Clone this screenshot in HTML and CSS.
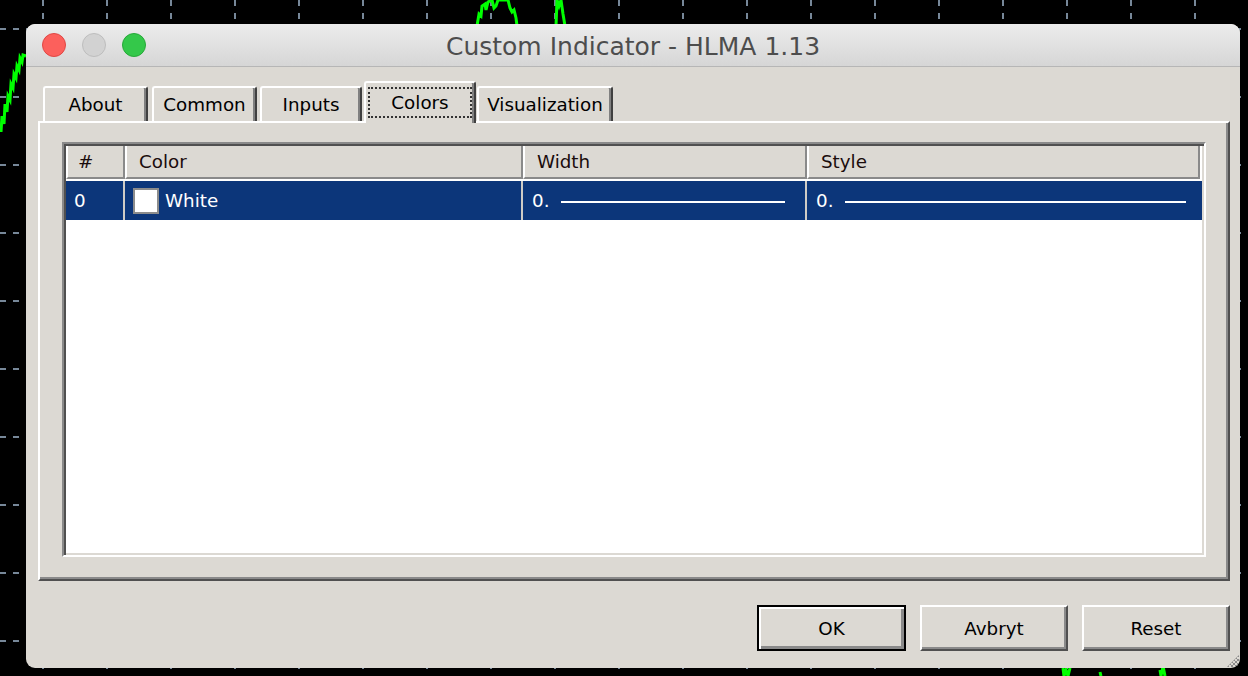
FILE: index.html
```html
<!DOCTYPE html>
<html>
<head>
<meta charset="utf-8">
<meta name="viewport" content="width=device-width, initial-scale=1.0">
<title>Custom Indicator - HLMA 1.13</title>

<link rel="stylesheet" href="styles.css">
</head>

<body>
<!-- chart behind the dialog -->
<svg class="chart" viewBox="0 0 1248 676" xmlns="http://www.w3.org/2000/svg">
    <path class="grid" d="M43 0V676M107 0V676M171 0V676M235 0V676M299 0V676M363 0V676M427 0V676M491 0V676M555 0V676M619 0V676M683 0V676M747 0V676M811 0V676M875 0V676M939 0V676M1003 0V676M1067 0V676M1131 0V676M1195 0V676"/>
    <path class="grid" d="M0 29H1248M0 97H1248M0 165H1248M0 233H1248M0 301H1248M0 369H1248M0 437H1248M0 505H1248M0 573H1248M0 641H1248"/>
    <polyline class="price" points="1,132 2,116 4,124 5,104 7,112 8,96 10,100 11,84 13,88 14,74 16,78 17,66 19,70 20,58 22,62 23,55 26,56"/>
    <polyline class="price" points="477,26 479,14 481,16 482,6 485,4 486,10 488,2 492,0 494,8 496,6 498,0 508,0 510,8 512,12 514,10 516,18 517,26"/>
    <polyline class="price" points="556,26 557,0 559,6 561,0 563,14 565,26"/>
    <polyline class="price" points="1063,668 1064,676 1066,670 1068,676 1070,668"/>
    <polyline class="price" points="1100,672 1101,676"/>
    <polyline class="price" points="1160,670 1161,676 1163,666 1165,676"/>
</svg>

<div class="window">
    <div class="titlebar">
        <div class="lights">
            <span class="light close"></span>
            <span class="light minimize"></span>
            <span class="light zoom"></span>
        </div>
        <div class="title">Custom Indicator - HLMA 1.13</div>
    </div>

    <div class="content">
        <div class="tabs">
            <div class="tab tab-about">About</div>
            <div class="tab tab-common">Common</div>
            <div class="tab tab-inputs">Inputs</div>
            <div class="tab tab-colors active"><span class="focus">Colors</span></div>
            <div class="tab tab-visual">Visualization</div>
        </div>

        <div class="panel">
            <div class="list">
                <div class="list-head">
                    <div class="head-cell first">#</div>
                    <div class="head-cell">Color</div>
                    <div class="head-cell">Width</div>
                    <div class="head-cell last">Style</div>
                </div>
                <div class="list-row selected">
                    <div class="cell cell-num">0</div>
                    <div class="cell cell-color"><span class="swatch"></span>White</div>
                    <div class="cell cell-width">0.<span class="line"></span></div>
                    <div class="cell cell-style">0.<span class="line"></span></div>
                </div>
            </div>
        </div>

        <div class="buttons">
            <div class="button default">OK</div>
            <div class="button">Avbryt</div>
            <div class="button">Reset</div>
        </div>
    </div>
    <div class="grip"></div>
</div>
</body>
</html>
```

FILE: styles.css
```css
body {
    margin: 0;
    padding: 0;
    width: 1248px;
    height: 676px;
    overflow: hidden;
    background: #000;
    position: relative;
    font-family: "DejaVu Sans", sans-serif;
}
.chart {
    position: absolute;
    left: 0;
    top: 0;
    width: 1248px;
    height: 676px;
}
.chart .grid {
    stroke: #778899;
    stroke-width: 2;
    stroke-dasharray: 6 7;
    fill: none;
}
.chart .price {
    stroke: #00ff00;
    stroke-width: 3;
    fill: none;
}

/* the dialog window */
.window {
    position: absolute;
    left: 26px;
    top: 24px;
    width: 1214px;
    height: 644px;
    background: #dcd9d3;
    border-radius: 9px;
    overflow: hidden;
}
.titlebar {
    height: 43px;
    box-sizing: border-box;
    display: grid;
    grid-template-columns: 1fr auto 1fr;
    align-items: center;
    background: linear-gradient(#ececec, #d6d6d6);
    border-bottom: 1px solid #b6b6b6;
}
.lights {
    display: flex;
    gap: 16px;
    padding-left: 16px;
}
.light {
    width: 24px;
    height: 24px;
    box-sizing: border-box;
    border-radius: 50%;
    border: 1px solid;
}
.light.close {
    background: #fc605c;
    border-color: #df4744;
}
.light.minimize {
    background: #d2d2d2;
    border-color: #bdbdbd;
}
.light.zoom {
    background: #34c84a;
    border-color: #27a839;
}
.title {
    font-size: 25px;
    color: #4d4d4d;
    margin-top: 2px;
}

.content {
    padding: 0 10px 0 12px;
}

/* tab strip */
.tabs {
    display: flex;
    align-items: flex-end;
    height: 40px;
    margin-top: 14px;
    padding-left: 5px;
    position: relative;
    z-index: 1;
}
.tab {
    height: 35px;
    box-sizing: border-box;
    border-top: 2px solid #fff;
    border-left: 2px solid #fff;
    border-right: 2px solid #404040;
    box-shadow: inset -2px 0 #808080;
    border-radius: 3px 3px 0 0;
    display: flex;
    align-items: center;
    justify-content: center;
    font-size: 18.3px;
    color: #000;
    background: #dcd9d3;
}
.tab-about { width: 105px; }
.tab-common { width: 105px; margin-left: 4px; }
.tab-inputs { width: 102px; margin-left: 3px; }
.tab-colors { width: 112px; margin-left: 2px; }
.tab-visual { width: 136px; margin-left: 1px; }
.tab.active {
    height: 42px;
    margin-bottom: -2px;
    padding: 4px 2px 5px 2px;
    align-items: stretch;
}
.focus {
    flex: 1;
    display: flex;
    align-items: center;
    justify-content: center;
    border: 2px dotted #333;
}

/* tab page */
.panel {
    height: 460px;
    box-sizing: border-box;
    border-top: 2px solid #fff;
    border-left: 2px solid #fff;
    border-right: 2px solid #505050;
    border-bottom: 2px solid #505050;
    box-shadow: inset -2px -2px #8a8a8a;
    padding: 19px 22px 22px 22px;
}
.list {
    height: 100%;
    box-sizing: border-box;
    background: #fff;
    border: 2px solid;
    border-color: #8a8a8a #fff #fff #8a8a8a;
    box-shadow: inset 2px 2px #505050, inset -2px -2px #dcd9d3;
    padding: 2px;
}
.list-head,
.list-row {
    display: grid;
    grid-template-columns: 59px 398px 284px 1fr;
}
.list-head {
    height: 33px;
    background: #dcd9d3;
    margin-right: 2px;
}
.head-cell {
    box-sizing: border-box;
    border-left: 2px solid #fff;
    border-right: 2px solid #8a8a8a;
    border-bottom: 2px solid #8a8a8a;
    padding-left: 12px;
    display: flex;
    align-items: center;
    font-size: 18.3px;
    color: #1a0c0c;
}
.head-cell.first {
    padding-left: 10px;
}
.list-row {
    height: 39px;
    margin-top: 2px;
}
.list-row.selected {
    background: #0c367a;
    color: #fff;
}
.cell {
    display: flex;
    align-items: center;
    font-size: 18.3px;
    box-sizing: border-box;
    border-right: 2px solid #cfccc6;
}
.cell-num {
    padding-left: 8px;
}
.cell-color {
    padding-left: 8px;
}
.swatch {
    width: 26px;
    height: 26px;
    box-sizing: border-box;
    background: #fff;
    border: 2px solid #8c8c8c;
    margin-right: 6px;
}
.cell-width {
    padding: 0 20px 0 9px;
}
.cell-style {
    padding: 0 16px 0 9px;
    border-right: none;
}
.line {
    flex: 1;
    height: 2px;
    background: #fff;
    margin-left: 12px;
    margin-top: 2px;
}

/* dialog buttons */
.buttons {
    display: flex;
    justify-content: flex-end;
    margin-top: 24px;
}
.button {
    width: 148px;
    height: 46px;
    box-sizing: border-box;
    margin-left: 14px;
    border: 2px solid;
    border-color: #fff #505050 #505050 #fff;
    box-shadow: inset -2px -2px #8a8a8a;
    display: flex;
    align-items: center;
    justify-content: center;
    font-size: 18.3px;
    color: #000;
}
.button.default {
    width: 149px;
    margin-left: 0;
    border: 2px solid #000;
    box-shadow: inset 2px 2px #fff, inset -3px -3px #8a8a8a;
}
.grip {
    position: absolute;
    right: 1px;
    bottom: 1px;
    width: 12px;
    height: 12px;
    background: repeating-conic-gradient(#8a8a8a 0 25%, #dcd9d3 0 50%) 0 0 / 4px 4px;
    clip-path: polygon(100% 0, 100% 100%, 0 100%);
}
```
